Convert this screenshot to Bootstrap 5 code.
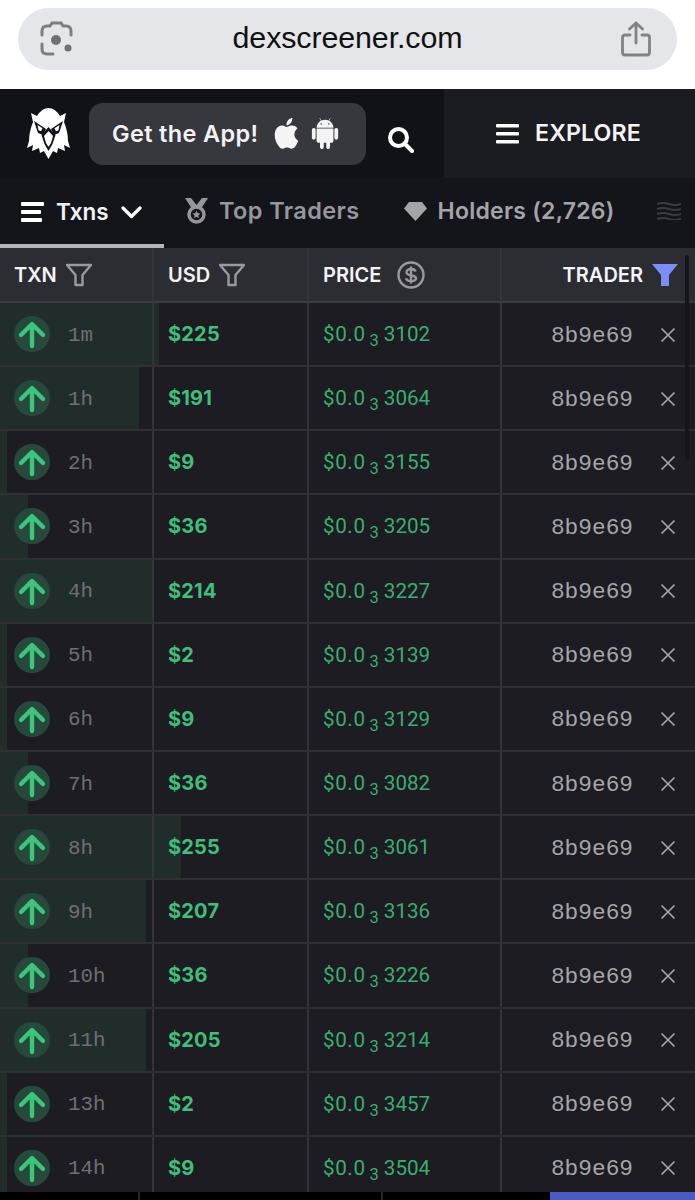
<!DOCTYPE html>
<html lang="en">
<head>
<meta charset="utf-8">
<title>dexscreener.com</title>
<link href="https://cdn.jsdelivr.net/npm/bootstrap@5.3.0/dist/css/bootstrap.min.css" rel="stylesheet">
<style>
html,body{height:1200px;overflow:hidden;background:#fff}
body{font-family:"Inter","Liberation Sans",sans-serif}
.safari{height:89px;padding:8px 18px 0}
.urlpill{height:62px;border-radius:31px;background:#e4e6e9;padding:0 26px 0 22px}
.urltext{font:30.400px "Liberation Sans",sans-serif;color:#111;letter-spacing:-.1px;margin-bottom:3px}
.topnav{height:89px;background:#111118}
.logobox{width:89px}
.appbtn{width:277px;height:62px;border-radius:14px;background:#37373e;color:#f2f2f3;font-size:23.500px;font-weight:600;padding-left:23px;letter-spacing:.35px}
.applogo{margin-left:14px}
.droidlogo{margin-left:9px}
.searchbox{width:78px;padding:4px 10px 0 0}
.explorebox{width:251px;background:#1b1b22;color:#f4f4f5;font-size:23.200px;font-weight:600;letter-spacing:.1px;padding-right:2px}
.tabsbar{height:70px;background:#14141b;overflow:hidden}
.tabx{height:70px;font-size:22.500px;font-weight:600;color:#97979b;white-space:nowrap;letter-spacing:-.1px}
.tabx.active-tab{width:164px;color:#f2f2f3;border-bottom:4px solid #b5b5b8;padding:2px 0 0 21px}
.tabgroup{padding-bottom:4px}
.tabtop{font-size:23.500px;letter-spacing:.4px}
.tabhold{font-size:23px;letter-spacing:.25px;color:#a5a5a8}
.grid-row{display:grid;grid-template-columns:154px 155px 193px 193px;position:relative}
.head-row{height:55px;background:#2c2c33;border-bottom:2px solid #3b3b42;color:#f4f4f5;font-size:20px;font-weight:600}
.data-row{height:64.150px;background:#1c1c22;border-bottom:2px solid #2f2f36}
.cellx{display:flex;align-items:center;border-right:2px solid #33333a;padding-left:14px;position:relative;min-width:0}
.cellx:last-child{border-right:0}
.vbar{position:absolute;left:0;top:0;bottom:0;background:#212d2b}
.arrowdisc{position:relative;width:36px;height:36px;border-radius:50%;background:#27493c;margin-left:0}
.agetext{position:relative;font:20.800px "Liberation Mono",monospace;color:#6f6f75;margin:2px 0 0 18px;letter-spacing:0}
.usdtext{font-size:20px;font-weight:700;color:#3fbf78;letter-spacing:.2px}
.pricetext{font:20.600px "Roboto","Liberation Sans",sans-serif;font-weight:400;color:#3aae6f;white-space:nowrap}
.pricehead{letter-spacing:.6px}
.subthree{font-size:16.500px;margin:0 5px 0 4px;position:relative;top:5px}
.tradertext{font:22.800px "Liberation Mono",monospace;color:#a5a5a9;margin-top:3px}
.traderc{justify-content:flex-end;padding-right:19px}
.closeic{margin:1px 0 0 27px}
.tablewrap{position:relative;height:944px;overflow:hidden}
.scrolltrack{position:absolute;left:685px;top:7px;width:4px;height:205px;border-radius:2px;background:#15151b}
.foot{height:8px;background:#000}
.footseg{border-right:2px solid #26262c;height:8px}
.foota{width:140px}
.footb{width:243px}
.footc{width:167px}
.footd{background:#4a5bc4}
</style>
</head>
<body>
<svg width="0" height="0" class="position-absolute">
  <symbol id="uparrow" viewBox="0 0 36 36"><path d="M18 30V9M7 19 18 8l11 11" fill="none" stroke="#3cc67a" stroke-width="4.400" stroke-linecap="round" stroke-linejoin="round"/></symbol>
  <symbol id="closex" viewBox="0 0 16 16"><path d="M1.500 1.500l13 13M14.500 1.500l-13 13" stroke="#a5a5a9" stroke-width="1.700" fill="none"/></symbol>
  <symbol id="funnel" viewBox="0 0 28 24"><path d="M2 2h24l-8.500 10v10h-7V12z" fill="none" stroke="#9a9a9e" stroke-width="2.400" stroke-linejoin="round"/></symbol>
</svg>

<div class="safari bg-white">
  <div class="urlpill d-flex align-items-center justify-content-between">
    <svg width="34" height="36" viewBox="0 0 34 36" fill="none"><path d="M2 14v-4q0-5 5-5h3l2-3h9l2 3h3q5 0 5 5v4M2 23v5q0 5 5 5h6" stroke="#7d8083" stroke-width="3" stroke-linecap="round"/><circle cx="16" cy="19" r="5" fill="#6f7275"/><circle cx="28" cy="27" r="3.500" fill="#6f7275"/></svg>
    <span class="urltext">dexscreener.com</span>
    <svg width="30" height="36" viewBox="0 0 30 36" fill="none" stroke="#808386" stroke-width="2.800" stroke-linecap="round" stroke-linejoin="round"><path d="M15 22V2M8.500 8 15 2l6.500 6M9 14H4q-2.500 0-2.500 2.500v15Q1.500 34 4 34h22q2.500 0 2.500-2.500v-15Q28.500 14 26 14h-5"/></svg>
  </div>
</div>

<nav class="topnav d-flex">
  <div class="logobox d-flex align-items-center justify-content-center">
    <svg width="43" height="51" viewBox="0 0 43 51" class="ms-2"><path fill="#fff" d="M4 5l6 3Q15 0 21.500 0T33 8l6-3-2 9q4 10 4 19l2 7-6-3 1 6-7-3-1 5-4-2-4.500 8-4.500-8-4 2-1-5-7 3 1-6-6 3 2-7q0-9 4-19z"/><path fill="#111118" d="M7 13l12 8-3 6-5-2zM36 13l-12 8 3 6 5-2z"/><path fill="#fff" d="M10.500 17l5 3.300-1.500 3-2.500-1zM32.500 17l-5 3.300 1.500 3 2.500-1z"/><path fill="#111118" d="M21.500 19l7 8-3 9-4 7-4-7-3-9z"/><path fill="#fff" d="M21.500 23l4.500 5-2 7-2.500 4-2.500-4-2-7z"/></svg>
  </div>
  <div class="d-flex align-items-center">
    <div class="appbtn d-flex align-items-center">
      <span>Get the App!</span>
      <svg width="29" height="31" viewBox="0 0 16 16" fill="#f4f4f5" class="applogo" preserveAspectRatio="none"><path d="M11.182.008C11.148-.03 9.923.023 8.857 1.18c-1.066 1.156-.902 2.482-.878 2.516.024.034 1.52.087 2.475-1.258.955-1.345.762-2.391.728-2.43zm3.314 11.733c-.048-.096-2.325-1.234-2.113-3.422.212-2.189 1.675-2.789 1.698-2.854.023-.065-.597-.79-1.254-1.157a3.692 3.692 0 0 0-1.563-.434c-.108-.003-.483-.095-1.254.116-.508.139-1.653.589-1.968.607-.316.018-1.256-.522-2.267-.665-.647-.09-1.335.067-1.824.263-.49.196-1.416.754-2.064 2.227-.648 1.473-.309 3.807-.067 4.533.242.726.62 1.914 1.263 2.78.572.977 1.33 1.655 1.647 1.886.317.231 1.211.385 1.831.068.5-.307 1.401-.483 1.757-.47.355.013 1.056.153 1.775.537.569.196 1.107.114 1.646-.105.539-.22 1.319-1.054 2.23-2.746.346-.786.503-1.211.472-1.164z"/></svg>
      <svg width="30" height="31" viewBox="0 0 16 16" fill="#f4f4f5" class="droidlogo" preserveAspectRatio="none"><path d="m10.213 1.471.691-1.26c.046-.083.03-.147-.048-.192-.085-.038-.15-.019-.195.058l-.7 1.27A4.832 4.832 0 0 0 8.005.941c-.688 0-1.34.135-1.956.404l-.7-1.27C5.303 0 5.239-.018 5.154.02c-.078.046-.094.11-.049.193l.691 1.259a4.25 4.25 0 0 0-1.673 1.476A3.697 3.697 0 0 0 3.5 5.02h9c0-.75-.208-1.44-.623-2.072a4.266 4.266 0 0 0-1.664-1.476ZM6.22 3.303a.367.367 0 0 1-.267.11.35.35 0 0 1-.263-.11.366.366 0 0 1-.107-.264.37.37 0 0 1 .107-.265.351.351 0 0 1 .263-.11c.103 0 .193.037.267.11a.36.36 0 0 1 .112.265.36.36 0 0 1-.112.264Zm4.101 0a.351.351 0 0 1-.262.11.366.366 0 0 1-.268-.11.358.358 0 0 1-.112-.264c0-.103.037-.191.112-.265a.367.367 0 0 1 .268-.11c.104 0 .19.037.262.11a.367.367 0 0 1 .107.265c0 .102-.035.19-.107.264ZM3.500 11.770c0 .294.104.544.311.75.208.204.46.307.76.307h.758l.01 2.182c0 .276.097.51.292.703a.961.961 0 0 0 .7.288.973.973 0 0 0 .71-.288.95.95 0 0 0 .292-.703v-2.182h1.343v2.182c0 .276.097.51.292.703a.972.972 0 0 0 .71.288.973.973 0 0 0 .71-.288.95.95 0 0 0 .292-.703v-2.182h.76c.291 0 .54-.103.749-.308.207-.205.311-.455.311-.75V5.365h-9v6.404Zm10.495-6.587a.983.983 0 0 0-.702.278.91.91 0 0 0-.293.685v4.063c0 .271.098.501.293.69a.97.97 0 0 0 .702.284c.28 0 .517-.095.712-.284a.924.924 0 0 0 .293-.69V6.146a.91.91 0 0 0-.293-.685.995.995 0 0 0-.712-.278Zm-12.702.283a.985.985 0 0 1 .712-.283c.273 0 .507.094.702.283a.913.913 0 0 1 .293.68v4.063a.932.932 0 0 1-.288.69.97.97 0 0 1-.707.284.986.986 0 0 1-.712-.284.924.924 0 0 1-.293-.69V6.146c0-.264.098-.491.293-.68Z"/></svg>
    </div>
  </div>
  <div class="searchbox d-flex align-items-center justify-content-center">
    <svg width="27" height="27" viewBox="0 0 27 27" fill="none" stroke="#fff" class="mt-2"><circle cx="11.500" cy="11.500" r="8.500" stroke-width="4"/><path d="M18 18l7 7" stroke-width="4" stroke-linecap="round"/></svg>
  </div>
  <div class="explorebox d-flex align-items-center justify-content-center gap-2">
    <svg width="23" height="20" viewBox="0 0 23 20" fill="#fff" class="me-2"><rect width="23" height="3.500" y="0" rx="1"/><rect width="23" height="3.500" y="8" rx="1"/><rect width="23" height="3.500" y="16" rx="1"/></svg>
    <span>EXPLORE</span>
  </div>
</nav>

<div class="tabsbar d-flex">
  <div class="tabx active-tab d-flex align-items-center">
    <svg width="24" height="20" viewBox="0 0 24 20" fill="#fff" style="margin-right:11px"><rect width="23" height="4" rx="1"/><rect x="0" y="8" width="20" height="4" rx="1"/><rect y="16" width="21" height="4" rx="1"/></svg>
    <span>Txns</span>
    <svg width="21" height="14" viewBox="0 0 21 14" fill="none" stroke="#fff" stroke-width="3.200" stroke-linecap="round" stroke-linejoin="round" style="margin-left:13px"><path d="M2 3l8.500 8.500L19 3"/></svg>
  </div>
  <div class="tabx tabgroup tabtop d-flex align-items-center" style="margin-left:21px">
    <svg width="23" height="26" viewBox="0 0 23 26" fill="#97979b" style="margin-right:11px"><path d="M0 0h6l5.500 7L17 0h6l-6.500 10h-10z"/><circle cx="11.500" cy="16.500" r="7.500" fill="none" stroke="#97979b" stroke-width="3.500"/><path d="M11.500 12.500l1.200 2.700 2.800.3-2.100 1.900.6 2.800-2.500-1.500-2.500 1.500.6-2.800-2.100-1.900 2.800-.3z"/></svg>
    <span>Top Traders</span>
  </div>
  <div class="tabx tabgroup tabhold d-flex align-items-center" style="margin-left:44px">
    <svg width="23" height="20" viewBox="0 0 23 20" fill="#a5a5a8" style="margin-right:11px"><path d="M5 1h13l5 6.500L11.500 20 0 7.500z"/></svg>
    <span>Holders (2,726)</span>
  </div>
  <div class="tabx tabgroup d-flex align-items-center" style="margin-left:42px">
    <svg width="24" height="18" viewBox="0 0 24 18" fill="none" stroke="#3b3b41" stroke-width="2"><path d="M0 2q6-2 12 0t12 0M0 7q6-2 12 0t12 0M0 12q6-2 12 0t12 0M0 17q6-2 12 0t12 0"/></svg>
  </div>
</div>

<div class="tablewrap">
  <div class="grid-row head-row">
    <div class="cellx gap-2"><span>TXN</span><svg width="28" height="24" viewBox="0 0 28 24"><use href="#funnel"/></svg></div>
    <div class="cellx gap-2"><span>USD</span><svg width="28" height="24" viewBox="0 0 28 24"><use href="#funnel"/></svg></div>
    <div class="cellx"><span>PRICE</span><svg width="28" height="28" viewBox="0 0 28 28" fill="none" stroke="#9a9a9e" class="ms-3"><circle cx="14" cy="14" r="12.500" stroke-width="2.400"/><path d="M18.500 10.500C18 8.500 16 8 14 8s-4.500 1-4.500 3.200c0 4.800 9.500 1.800 9.500 6 0 2.300-2.500 2.800-5 2.800s-4.500-.8-5-2.800M14 5.500v17" stroke-width="2.400"/></svg></div>
    <div class="cellx justify-content-end gap-2" style="padding-right:16px"><span>TRADER</span><svg width="28" height="24" viewBox="0 0 28 24"><path d="M1 1h26l-9 11v11h-8V12z" fill="#7c8cf8"/></svg></div>
  </div>

  <div class="grid-row data-row"><div class="vbar" style="width:159px"></div><div class="cellx"><div class="arrowdisc"><svg width="36" height="36"><use href="#uparrow"/></svg></div><span class="agetext">1m</span></div><div class="cellx"><span class="usdtext">$225</span></div><div class="cellx"><span class="pricetext"><span class="pricehead">$0.0</span><span class="subthree">3</span>3102</span></div><div class="cellx traderc"><span class="tradertext">8b9e69</span><svg class="closeic" width="16" height="16"><use href="#closex"/></svg></div></div>
  <div class="grid-row data-row"><div class="vbar" style="width:139px"></div><div class="cellx"><div class="arrowdisc"><svg width="36" height="36"><use href="#uparrow"/></svg></div><span class="agetext">1h</span></div><div class="cellx"><span class="usdtext">$191</span></div><div class="cellx"><span class="pricetext"><span class="pricehead">$0.0</span><span class="subthree">3</span>3064</span></div><div class="cellx traderc"><span class="tradertext">8b9e69</span><svg class="closeic" width="16" height="16"><use href="#closex"/></svg></div></div>
  <div class="grid-row data-row"><div class="vbar" style="width:7px"></div><div class="cellx"><div class="arrowdisc"><svg width="36" height="36"><use href="#uparrow"/></svg></div><span class="agetext">2h</span></div><div class="cellx"><span class="usdtext">$9</span></div><div class="cellx"><span class="pricetext"><span class="pricehead">$0.0</span><span class="subthree">3</span>3155</span></div><div class="cellx traderc"><span class="tradertext">8b9e69</span><svg class="closeic" width="16" height="16"><use href="#closex"/></svg></div></div>
  <div class="grid-row data-row"><div class="vbar" style="width:28px"></div><div class="cellx"><div class="arrowdisc"><svg width="36" height="36"><use href="#uparrow"/></svg></div><span class="agetext">3h</span></div><div class="cellx"><span class="usdtext">$36</span></div><div class="cellx"><span class="pricetext"><span class="pricehead">$0.0</span><span class="subthree">3</span>3205</span></div><div class="cellx traderc"><span class="tradertext">8b9e69</span><svg class="closeic" width="16" height="16"><use href="#closex"/></svg></div></div>
  <div class="grid-row data-row"><div class="vbar" style="width:153px"></div><div class="cellx"><div class="arrowdisc"><svg width="36" height="36"><use href="#uparrow"/></svg></div><span class="agetext">4h</span></div><div class="cellx"><span class="usdtext">$214</span></div><div class="cellx"><span class="pricetext"><span class="pricehead">$0.0</span><span class="subthree">3</span>3227</span></div><div class="cellx traderc"><span class="tradertext">8b9e69</span><svg class="closeic" width="16" height="16"><use href="#closex"/></svg></div></div>
  <div class="grid-row data-row"><div class="vbar" style="width:7px"></div><div class="cellx"><div class="arrowdisc"><svg width="36" height="36"><use href="#uparrow"/></svg></div><span class="agetext">5h</span></div><div class="cellx"><span class="usdtext">$2</span></div><div class="cellx"><span class="pricetext"><span class="pricehead">$0.0</span><span class="subthree">3</span>3139</span></div><div class="cellx traderc"><span class="tradertext">8b9e69</span><svg class="closeic" width="16" height="16"><use href="#closex"/></svg></div></div>
  <div class="grid-row data-row"><div class="vbar" style="width:7px"></div><div class="cellx"><div class="arrowdisc"><svg width="36" height="36"><use href="#uparrow"/></svg></div><span class="agetext">6h</span></div><div class="cellx"><span class="usdtext">$9</span></div><div class="cellx"><span class="pricetext"><span class="pricehead">$0.0</span><span class="subthree">3</span>3129</span></div><div class="cellx traderc"><span class="tradertext">8b9e69</span><svg class="closeic" width="16" height="16"><use href="#closex"/></svg></div></div>
  <div class="grid-row data-row"><div class="vbar" style="width:28px"></div><div class="cellx"><div class="arrowdisc"><svg width="36" height="36"><use href="#uparrow"/></svg></div><span class="agetext">7h</span></div><div class="cellx"><span class="usdtext">$36</span></div><div class="cellx"><span class="pricetext"><span class="pricehead">$0.0</span><span class="subthree">3</span>3082</span></div><div class="cellx traderc"><span class="tradertext">8b9e69</span><svg class="closeic" width="16" height="16"><use href="#closex"/></svg></div></div>
  <div class="grid-row data-row"><div class="vbar" style="width:181px"></div><div class="cellx"><div class="arrowdisc"><svg width="36" height="36"><use href="#uparrow"/></svg></div><span class="agetext">8h</span></div><div class="cellx"><span class="usdtext">$255</span></div><div class="cellx"><span class="pricetext"><span class="pricehead">$0.0</span><span class="subthree">3</span>3061</span></div><div class="cellx traderc"><span class="tradertext">8b9e69</span><svg class="closeic" width="16" height="16"><use href="#closex"/></svg></div></div>
  <div class="grid-row data-row"><div class="vbar" style="width:146px"></div><div class="cellx"><div class="arrowdisc"><svg width="36" height="36"><use href="#uparrow"/></svg></div><span class="agetext">9h</span></div><div class="cellx"><span class="usdtext">$207</span></div><div class="cellx"><span class="pricetext"><span class="pricehead">$0.0</span><span class="subthree">3</span>3136</span></div><div class="cellx traderc"><span class="tradertext">8b9e69</span><svg class="closeic" width="16" height="16"><use href="#closex"/></svg></div></div>
  <div class="grid-row data-row"><div class="vbar" style="width:28px"></div><div class="cellx"><div class="arrowdisc"><svg width="36" height="36"><use href="#uparrow"/></svg></div><span class="agetext">10h</span></div><div class="cellx"><span class="usdtext">$36</span></div><div class="cellx"><span class="pricetext"><span class="pricehead">$0.0</span><span class="subthree">3</span>3226</span></div><div class="cellx traderc"><span class="tradertext">8b9e69</span><svg class="closeic" width="16" height="16"><use href="#closex"/></svg></div></div>
  <div class="grid-row data-row"><div class="vbar" style="width:146px"></div><div class="cellx"><div class="arrowdisc"><svg width="36" height="36"><use href="#uparrow"/></svg></div><span class="agetext">11h</span></div><div class="cellx"><span class="usdtext">$205</span></div><div class="cellx"><span class="pricetext"><span class="pricehead">$0.0</span><span class="subthree">3</span>3214</span></div><div class="cellx traderc"><span class="tradertext">8b9e69</span><svg class="closeic" width="16" height="16"><use href="#closex"/></svg></div></div>
  <div class="grid-row data-row"><div class="vbar" style="width:7px"></div><div class="cellx"><div class="arrowdisc"><svg width="36" height="36"><use href="#uparrow"/></svg></div><span class="agetext">13h</span></div><div class="cellx"><span class="usdtext">$2</span></div><div class="cellx"><span class="pricetext"><span class="pricehead">$0.0</span><span class="subthree">3</span>3457</span></div><div class="cellx traderc"><span class="tradertext">8b9e69</span><svg class="closeic" width="16" height="16"><use href="#closex"/></svg></div></div>
  <div class="grid-row data-row"><div class="vbar" style="width:7px"></div><div class="cellx"><div class="arrowdisc"><svg width="36" height="36"><use href="#uparrow"/></svg></div><span class="agetext">14h</span></div><div class="cellx"><span class="usdtext">$9</span></div><div class="cellx"><span class="pricetext"><span class="pricehead">$0.0</span><span class="subthree">3</span>3504</span></div><div class="cellx traderc"><span class="tradertext">8b9e69</span><svg class="closeic" width="16" height="16"><use href="#closex"/></svg></div></div>
  <div class="scrolltrack"></div>
</div>
<div class="foot d-flex">
  <div class="footseg foota"></div>
  <div class="footseg footb"></div>
  <div class="footc"></div>
  <div class="flex-grow-1 footd"></div>
</div>
<script src="https://cdn.jsdelivr.net/npm/bootstrap@5.3.0/dist/js/bootstrap.bundle.min.js"></script>
</body>
</html>
